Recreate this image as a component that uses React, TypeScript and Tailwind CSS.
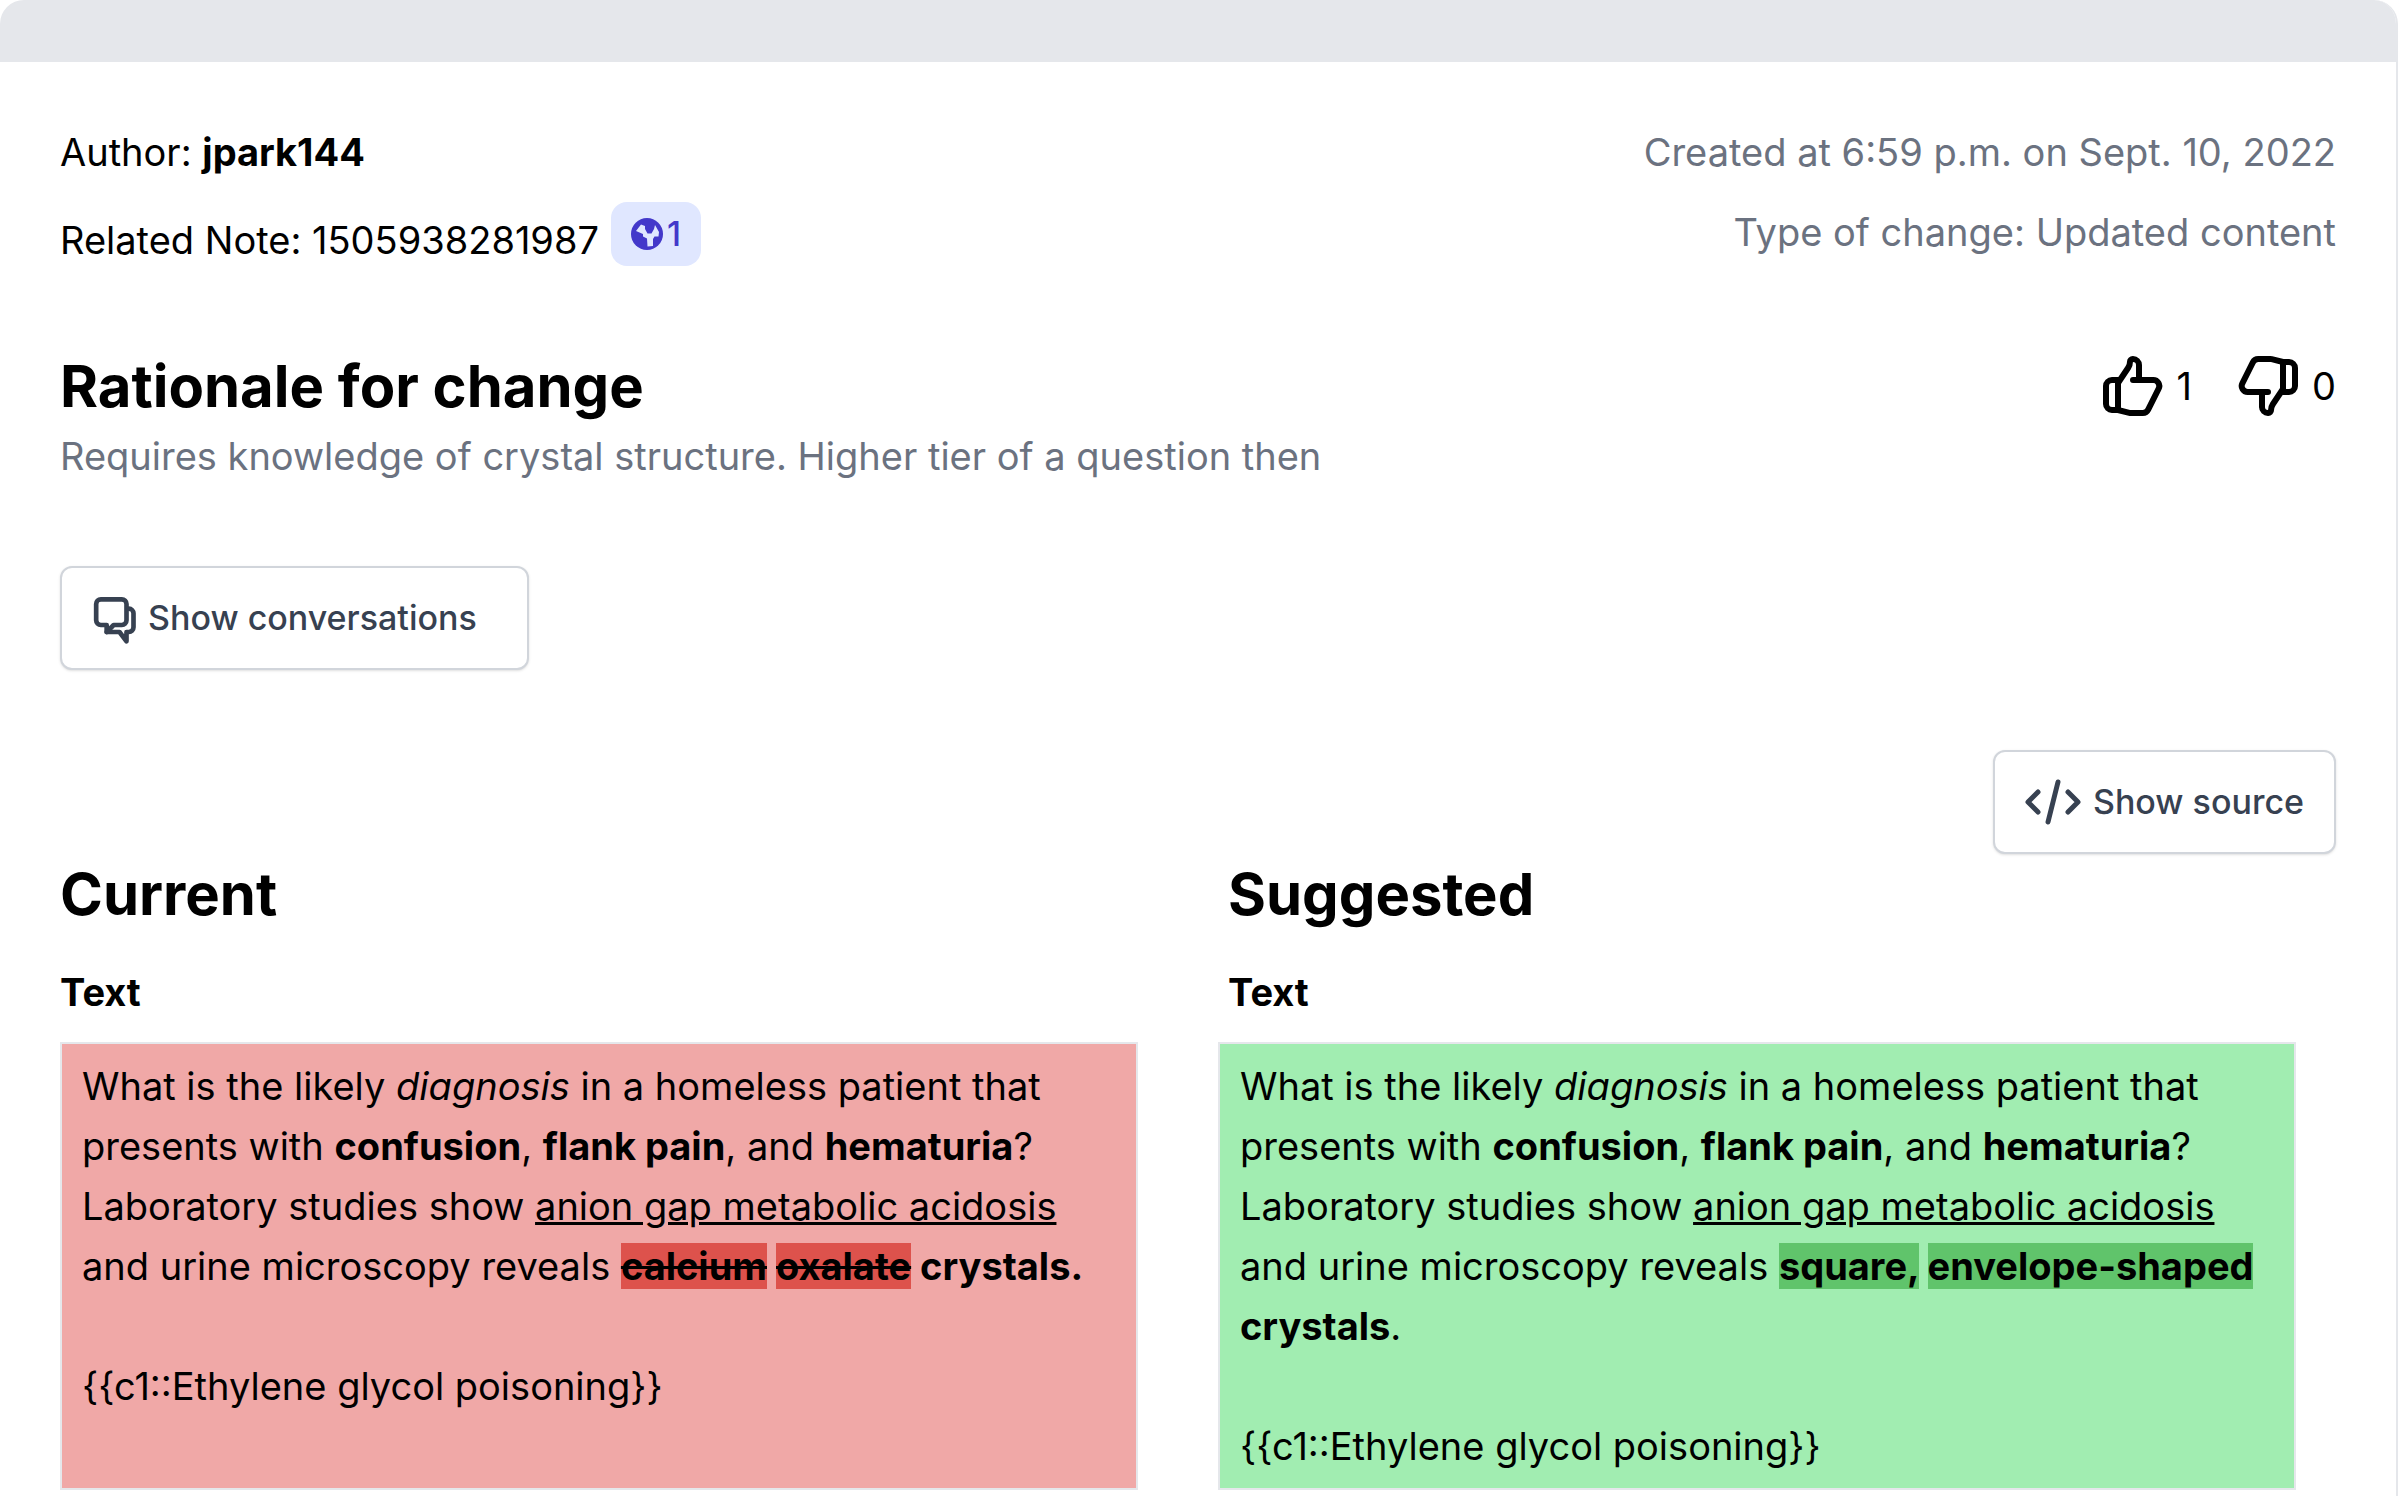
import { HiOutlineThumbUp, HiOutlineThumbDown } from "react-icons/hi";
import type { ReactNode } from "react";

function GlobeIcon() {
  return (
    <svg viewBox="0 0 32 32" className="size-8" aria-hidden="true">
      <circle cx="16" cy="16" r="16" fill="#4338ca" />
      <path
        fill="#e0e7ff"
        d="M5 13 10 6.500 14 8v3l2.500 4.500h4L23 11l1-4 4 7-.500 4.500h-4L22 21v7l-5.500.500-.500-8-4-2V16Z"
      />
    </svg>
  );
}

function ChatIcon() {
  return (
    <svg
      viewBox="0 0 24 24"
      className="size-14"
      fill="none"
      stroke="currentColor"
      strokeWidth="2"
      strokeLinecap="round"
      strokeLinejoin="round"
      aria-hidden="true"
    >
      <path d="M5.500 4h9a2 2 0 0 1 2 2v7a2 2 0 0 1-2 2h-3.500l-3 3v-3h-2.500a2 2 0 0 1-2-2v-7a2 2 0 0 1 2-2Z" />
      <path d="M17.500 8a2 2 0 0 1 2 2v6a2 2 0 0 1-2 2h-1v4l-3-4h-5.500" />
    </svg>
  );
}

function CodeIcon() {
  return (
    <svg
      viewBox="0 0 56 46"
      className="h-[46px] w-[56px]"
      fill="none"
      stroke="currentColor"
      strokeWidth="5"
      strokeLinecap="round"
      strokeLinejoin="round"
      aria-hidden="true"
    >
      <path d="M13 13 3 23l10 10M43 13l10 10-10 10M33 3 23 43" />
    </svg>
  );
}

function Button({ children, className }: { children: ReactNode; className: string }) {
  return (
    <button
      type="button"
      className={`flex h-[104px] items-center rounded-xl border-2 border-[#d1d5db] bg-white text-[34px] font-medium text-[#374151] shadow-sm ${className}`}
    >
      {children}
    </button>
  );
}

function Question({ children }: { children: ReactNode }) {
  return (
    <>
      <p>
        What is the likely <i>diagnosis</i> in a homeless patient that presents with <b>confusion</b>,{" "}
        <b>flank pain</b>, and <b>hematuria</b>? Laboratory studies show <u>anion gap metabolic acidosis</u> and
        urine microscopy reveals {children}
      </p>
      <br />
      <p>{"{{c1::Ethylene glycol poisoning}}"}</p>
    </>
  );
}

export default function App() {
  return (
    <main className="overflow-hidden rounded-t-3xl border-r-2 border-[#e5e7eb] bg-white pb-[6px] font-['Inter',sans-serif] text-[38px] leading-[60px] text-black">
      <div className="h-[62px] bg-[#e5e7eb]" />
      <div className="pl-[60px] pr-[60px] pt-[60px]">
        <header className="flex justify-between">
          <div className="flex flex-col gap-5">
            <p>
              Author: <b>jpark144</b>
            </p>
            <div className="flex gap-3">
              <p className="pt-2">Related Note: 1505938281987</p>
              <span className="flex h-16 items-center gap-1 rounded-2xl bg-[#e0e7ff] px-5 text-[34px] font-medium text-[#4338ca]">
                <GlobeIcon />1
              </span>
            </div>
          </div>
          <div className="flex flex-col gap-5 text-right text-[#6b7280]">
            <p>Created at 6:59 p.m. on Sept. 10, 2022</p>
            <p>Type of change: Updated content</p>
          </div>
        </header>

        <section className="mt-20 flex items-start justify-between">
          <div>
            <h2 className="text-[58px] font-bold leading-[72px]">Rationale for change</h2>
            <p className="mt-1 text-[#6b7280]">Requires knowledge of crystal structure. Higher tier of a question then</p>
          </div>
          <div className="flex gap-10">
            <button type="button" aria-label="Like" className="flex items-center gap-2">
              <HiOutlineThumbUp className="size-[72px]" />1
            </button>
            <button type="button" aria-label="Dislike" className="flex items-center gap-2">
              <HiOutlineThumbDown className="size-[72px]" />0
            </button>
          </div>
        </section>

        <div className="mt-20">
          <Button className="gap-1 pl-[26px] pr-[50px]">
            <ChatIcon />
            Show conversations
          </Button>
        </div>
        <div className="mt-20 flex justify-end">
          <Button className="gap-3 px-[30px]">
            <CodeIcon />
            Show source
          </Button>
        </div>

        <div className="mt-1 grid grid-cols-2 pr-10 text-[58px] font-bold leading-[72px]">
          <h2>Current</h2>
          <h2 className="pl-[50px]">Suggested</h2>
        </div>
        <div className="mt-8 grid grid-cols-2 pr-10 font-bold">
          <h3>Text</h3>
          <h3 className="pl-[50px]">Text</h3>
        </div>
        <div className="mt-5 grid grid-cols-2 gap-20 pr-10">
          <div className="border-2 border-[#e5e7eb] bg-[#f0a8a7] px-5 py-3">
            <Question>
              <b>
                <del className="bg-[#dd524c]">calcium</del> <del className="bg-[#dd524c]">oxalate</del> crystals.
              </b>
            </Question>
          </div>
          <div className="border-2 border-[#e5e7eb] bg-[#a1edb1] px-5 py-3">
            <Question>
              <b>
                <ins className="bg-[#60c46b] no-underline">square,</ins>{" "}
                <ins className="bg-[#60c46b] no-underline">envelope-shaped</ins> crystals
              </b>
              .
            </Question>
          </div>
        </div>
      </div>
    </main>
  );
}
